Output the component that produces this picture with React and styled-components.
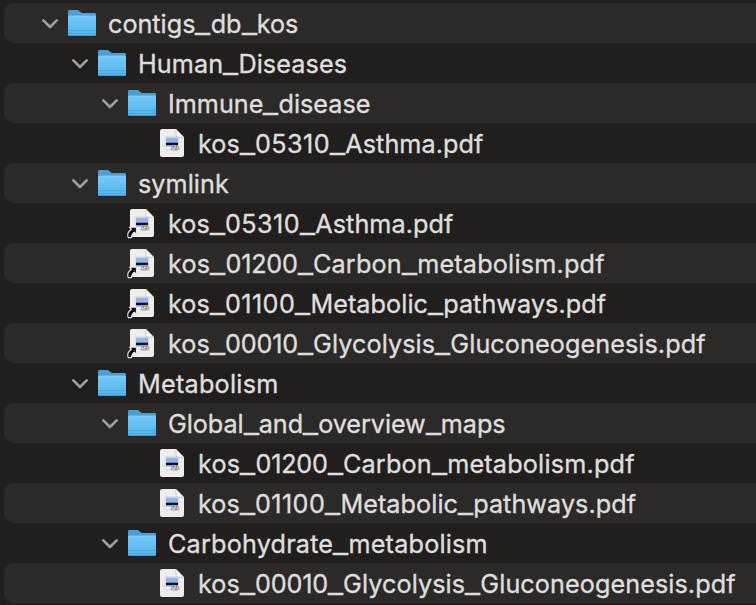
import React from "react";
import styled, { createGlobalStyle } from "styled-components";

const GlobalStyle = createGlobalStyle`
  html, body { margin: 0; background: #201f1e; }
  body { overflow: hidden; }
`;

const Browser = styled.main`
  box-sizing: border-box;
  width: 756px;
  height: 605px;
  padding: 3px 0 2px 4px;
  overflow: hidden;
  background: #201f1e;
`;

const Row = styled.div`
  box-sizing: border-box;
  display: flex;
  align-items: center;
  height: 40px;
  padding-left: ${(p) => 34 + p.$depth * 30}px;
  border-radius: 9px 0 0 9px;
  background: ${(p) => (p.$striped ? "#2b2a29" : "transparent")};
`;

const Disclosure = styled.span`
  display: flex;
  flex: none;
  width: 24px;
  height: 40px;
`;

const IconSlot = styled.span`
  display: flex;
  flex: none;
  width: 46px;
  height: 40px;
  svg { overflow: visible; }
`;

const Label = styled.span`
  height: 40px;
  padding-top: 1px;
  box-sizing: border-box;
  font: 400 25.2px/40px Inter, sans-serif;
  letter-spacing: ${(p) => p.$tracking}px;
  -webkit-text-stroke: 0.35px #dfdedd;
  color: #dfdedd;
  white-space: pre;
`;

const Digits = styled.span`
  letter-spacing: ${(p) => p.$tracking}px;
`;

const Underscore = styled.span`
  display: inline-block;
  width: 15.2px;
  letter-spacing: 0;
  -webkit-text-stroke-width: 0.6px;
  transform: scaleX(1.3);
  transform-origin: 0 50%;
`;

function Chevron() {
  return (
    <svg width="24" height="40" viewBox="0 0 24 40" fill="none">
      <path d="M5.3 17.3 12 24 18.7 17.3" stroke="#a09f9e" strokeWidth="2.6" strokeLinecap="round" strokeLinejoin="round" />
    </svg>
  );
}

function Folder() {
  return (
    <svg width="42" height="40" viewBox="0 0 42 40">
      <path d="M6 32.5h28v1.2H6z" fill="#151618" opacity=".6" />
      <path d="M6 8.4Q6 7 7.4 7h7.7c1 0 1.5.4 2.2 1l1.4 1.2c.6.5 1 .8 2 .8h11.9Q34 10 34 11.4V18H6z" fill="#4b9fd4" />
      <path d="M6 14Q6 12.7 7.3 12.7h25.4Q34 12.7 34 14v17.5q0 1.5-1.4 1.5H7.4Q6 33 6 31.5z" fill="url(#folderFront)" />
      <path d="M7 13.2h26" stroke="#86d1fa" strokeWidth=".8" />
      <path d="M6 27.5h28M6 30.5h28" stroke="#4aa5dc" strokeWidth=".8" />
      <path d="M7 32.6h26" stroke="#3c8fc5" strokeWidth=".8" />
    </svg>
  );
}

function Document({ linked }) {
  return (
    <svg width="42" height="40" viewBox="0 0 42 40">
      <path d="M8 8q0-2 2-2h13.8L32 14.3V32q0 2-2 2H10q-2 0-2-2z" fill="#eeeeed" />
      <path d="M23.8 6v6.6q0 1.7 1.7 1.7H32z" fill="#fafafa" />
      <path d="M24 6.5v6.1q0 1.6 1.5 1.6h6" fill="none" stroke="#b4b4b4" strokeWidth=".7" />
      <path d="M13.1 14h13.4v12.8H13.1z" fill="#fafafa" stroke="#cacaca" strokeWidth=".7" />
      <path d="M14 14.6h12v5.4H14z" fill="#92b5ee" />
      <path d="M14 19.7h12v2.6H14z" fill="#09112c" />
      <path d="M14 22.3h5.8v1.2H14z" fill="#6e8ccb" />
      <path d="m18.8 26 1.7-3.7h5l1.8 3.2-1.8 1.6h-5z" fill="#cbcbca" stroke="#777776" strokeWidth=".6" />
      <path d="M20.8 23.8h1.4M23.8 23.8h1.2M23.3 25.7h1.4" stroke="#444" strokeWidth=".9" />
      {linked && (
        <path d="M7.4 24.2h7v7l-2.3-2.1q-2.4 1.8-2.8 5.5H6.2q-1.9-4.7 3.3-8.3z" fill="#050505" stroke="#ececec" strokeWidth="1.1" strokeLinejoin="round" />
      )}
    </svg>
  );
}

const entries = [
  { name: "contigs_db_kos", depth: 0, kind: "folder", tracking: 0 },
  { name: "Human_Diseases", depth: 1, kind: "folder", tracking: 0.1 },
  { name: "Immune_disease", depth: 2, kind: "folder", tracking: 0 },
  { name: "kos_05310_Asthma.pdf", depth: 3, kind: "file", tracking: 0.05, digits: 0.45 },
  { name: "symlink", depth: 1, kind: "folder", tracking: 0.05 },
  { name: "kos_05310_Asthma.pdf", depth: 2, kind: "link", tracking: 0.05, digits: 0.45 },
  { name: "kos_01200_Carbon_metabolism.pdf", depth: 2, kind: "link", tracking: 0.2, digits: -0.2 },
  { name: "kos_01100_Metabolic_pathways.pdf", depth: 2, kind: "link", tracking: 0.06, digits: 0.4 },
  { name: "kos_00010_Glycolysis_Gluconeogenesis.pdf", depth: 2, kind: "link", tracking: 0.08, digits: -0.2 },
  { name: "Metabolism", depth: 1, kind: "folder", tracking: 0.25 },
  { name: "Global_and_overview_maps", depth: 2, kind: "folder", tracking: -0.06 },
  { name: "kos_01200_Carbon_metabolism.pdf", depth: 3, kind: "file", tracking: 0.2, digits: -0.2 },
  { name: "kos_01100_Metabolic_pathways.pdf", depth: 3, kind: "file", tracking: 0.06, digits: 0.4 },
  { name: "Carbohydrate_metabolism", depth: 2, kind: "folder", tracking: 0.2 },
  { name: "kos_00010_Glycolysis_Gluconeogenesis.pdf", depth: 3, kind: "file", tracking: 0.08, digits: -0.2 },
];

function FileName({ name, tracking, digits }) {
  return (
    <Label $tracking={tracking}>
      {name.split("_").map((part, i) => (
        <React.Fragment key={i}>
          {i > 0 && <Underscore>_</Underscore>}
          {/^\d+$/.test(part) ? <Digits $tracking={digits}>{part}</Digits> : part}
        </React.Fragment>
      ))}
    </Label>
  );
}

export default function App() {
  return (
    <Browser>
      <GlobalStyle />
      <svg width="0" height="0" display="block">
        <defs>
          <linearGradient id="folderFront" x1="0" y1="0" x2="0" y2="1">
            <stop offset="0" stopColor="#74c8f8" />
            <stop offset="1" stopColor="#56b3ea" />
          </linearGradient>
        </defs>
      </svg>
      {entries.map((entry, i) => (
        <Row key={i} $depth={entry.depth} $striped={i % 2 === 0}>
          <Disclosure>{entry.kind === "folder" && <Chevron />}</Disclosure>
          <IconSlot>{entry.kind === "folder" ? <Folder /> : <Document linked={entry.kind === "link"} />}</IconSlot>
          <FileName name={entry.name} tracking={entry.tracking} digits={entry.digits} />
        </Row>
      ))}
    </Browser>
  );
}
